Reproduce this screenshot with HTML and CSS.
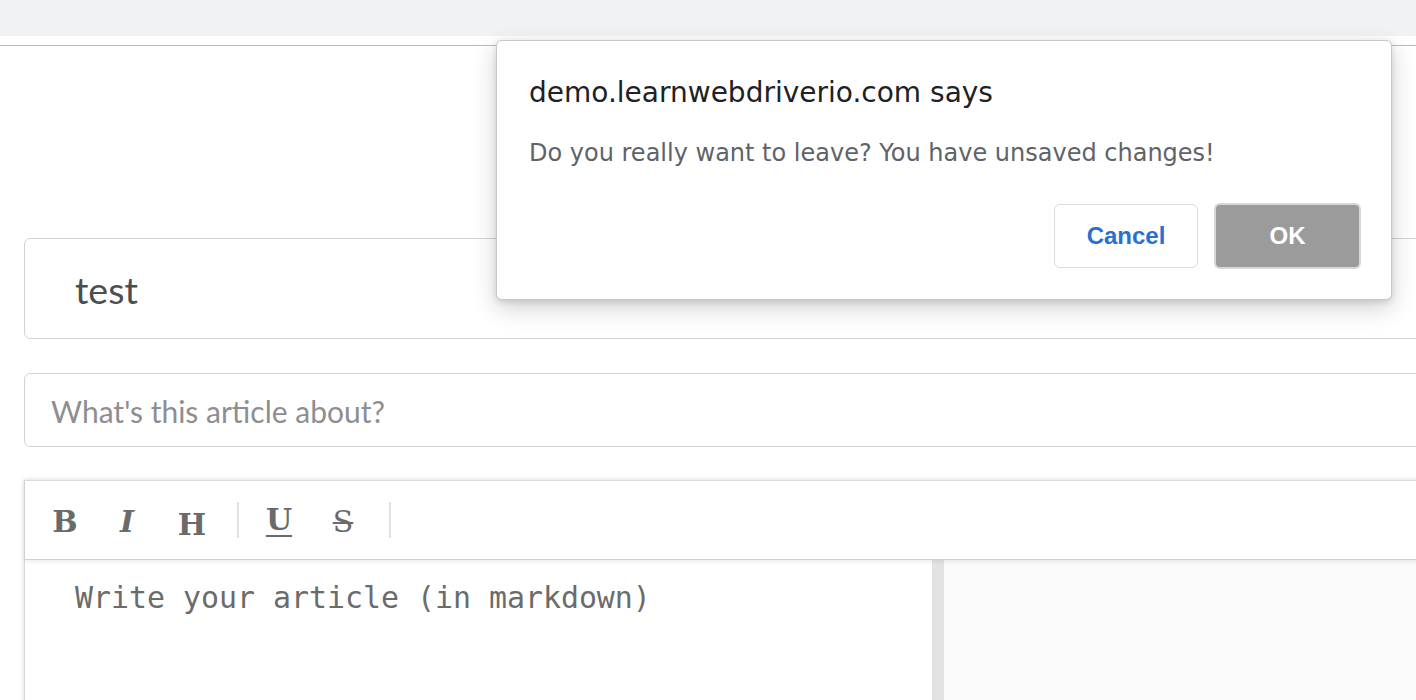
FILE: index.html
```html
<!DOCTYPE html>
<html>
<head>
<meta charset="utf-8">
<link rel="stylesheet" href="styles.css">
</head>
<body>
<div class="topstrip"></div>
<div class="nav"></div>
<main class="form">
  <div class="field field-title"><span class="title-text">test</span></div>
  <div class="field field-desc"><span class="placeholder">What's this article about?</span></div>
  <div class="editor">
    <div class="toolbar">
      <span class="tb tb-b">B</span>
      <span class="tb tb-i">I</span>
      <span class="tb tb-h">H</span>
      <span class="sep"></span>
      <span class="tb tb-u">U</span>
      <span class="tb tb-s">S</span>
      <span class="sep"></span>
    </div>
    <div class="panes">
      <div class="pane-edit"><span class="mono">Write your article (in markdown)</span></div>
      <div class="splitter"></div>
      <div class="pane-preview"></div>
    </div>
  </div>
</main>
<div class="dialog">
  <div class="dlg-title">demo.learnwebdriverio.com says</div>
  <div class="dlg-msg">Do you really want to leave? You have unsaved changes!</div>
  <div class="dlg-actions">
    <button class="btn btn-cancel">Cancel</button>
    <button class="btn btn-ok">OK</button>
  </div>
</div>
</body>
</html>
```
FILE: styles.css
```css
html, body {
  margin: 0;
  padding: 0;
  background: #ffffff;
  overflow: hidden;
  width: 1416px;
  height: 700px;
}
body {
  font-family: "Lato", "Liberation Sans", sans-serif;
  position: relative;
}
.topstrip {
  height: 36px;
  background: #f1f2f4;
}
.nav {
  height: 9px;
  border-bottom: 1px solid #b9b9b9;
}
.form {
  padding: 192px 0 0 24px;
  margin-right: -40px;
  display: flex;
  flex-direction: column;
}
.field {
  box-sizing: border-box;
  border: 1px solid #d3d3d3;
  border-radius: 6px;
  display: flex;
  align-items: center;
}
.field-title {
  height: 101px;
  padding-left: 50px;
}
.title-text {
  font-size: 37.5px;
  color: #4b4d50;
  margin-top: 2px;
}
.field-desc {
  height: 74px;
  margin-top: 34px;
  padding-left: 26px;
}
.placeholder {
  font-size: 30px;
  color: #8e8e90;
  margin-top: 1px;
}
.editor {
  margin-top: 33px;
  height: 260px;
  border-left: 1px solid #d8d8d8;
  box-shadow: -2px 0 4px rgba(0,0,0,0.06), 0 -2px 4px rgba(0,0,0,0.06);
  display: flex;
  flex-direction: column;
}
.toolbar {
  height: 80px;
  box-sizing: border-box;
  border-top: 1px solid #dcdcdc;
  border-bottom: 1px solid #cfcfcf;
  box-shadow: 0 2px 4px rgba(0,0,0,0.08);
  display: flex;
  align-items: center;
  padding-left: 26px;
  position: relative;
  z-index: 1;
  background: #fff;
}
.tb {
  font-family: "DejaVu Serif", "Liberation Serif", serif;
  font-weight: bold;
  font-size: 30px;
  color: #6a6a6a;
  text-align: center;
  line-height: 1;
  margin-top: 4px;
}
.tb-b { width: 28px; margin-right: 40px; }
.tb-i { font-style: italic; width: 16px; margin-right: 42px; }
.tb-h { width: 30px; margin-right: 30px; margin-top: 10px; }
.tb-u { text-decoration: underline; text-decoration-thickness: 2px; text-underline-offset: 5px; width: 28px; margin: 0 36px 0 26px; font-weight: 600; }
.tb-s { text-decoration: line-through; text-decoration-thickness: 2px; width: 28px; margin-right: 32px; font-weight: normal; }
.sep {
  width: 2px;
  height: 36px;
  background: #e3e3e3;
}
.panes {
  flex: 1;
  display: flex;
}
.pane-edit {
  width: 907px;
  padding: 20px 0 0 50px;
  box-sizing: border-box;
}
.mono {
  font-family: "DejaVu Sans Mono", monospace;
  font-size: 29.9px;
  color: #6b6b6b;
}
.splitter {
  width: 12px;
  background: #e3e3e3;
}
.pane-preview {
  flex: 1;
  background: #fafafa;
}
.dialog {
  position: absolute;
  left: 496px;
  top: 40px;
  width: 896px;
  height: 260px;
  box-sizing: border-box;
  background: #fff;
  border: 1px solid #c9c9c9;
  border-radius: 6px;
  box-shadow: 0 8px 24px rgba(0,0,0,0.18), 0 2px 6px rgba(0,0,0,0.12);
  padding: 34px 30px 0 32px;
  font-family: "DejaVu Sans", "Liberation Sans", sans-serif;
  display: flex;
  flex-direction: column;
}
.dlg-title {
  font-size: 28px;
  color: #202124;
  line-height: 36px;
}
.dlg-msg {
  font-size: 24px;
  color: #5f6368;
  margin-top: 27px;
  line-height: 30px;
}
.dlg-actions {
  display: flex;
  justify-content: flex-end;
  gap: 16px;
  margin-top: 35px;
}
.btn {
  font-family: "Liberation Sans", Arial, sans-serif;
  font-weight: bold;
  font-size: 24px;
  border-radius: 6px;
  height: 64px;
  cursor: default;
}
.btn-cancel {
  width: 144px;
  background: #fff;
  border: 1px solid #dadce0;
  color: #2a6fd2;
  margin-top: 1px;
}
.btn-ok {
  width: 147px;
  height: 66px;
  background: #9b9b9b;
  border: 2px solid #d7d7d7;
  color: #fff;
}
```
